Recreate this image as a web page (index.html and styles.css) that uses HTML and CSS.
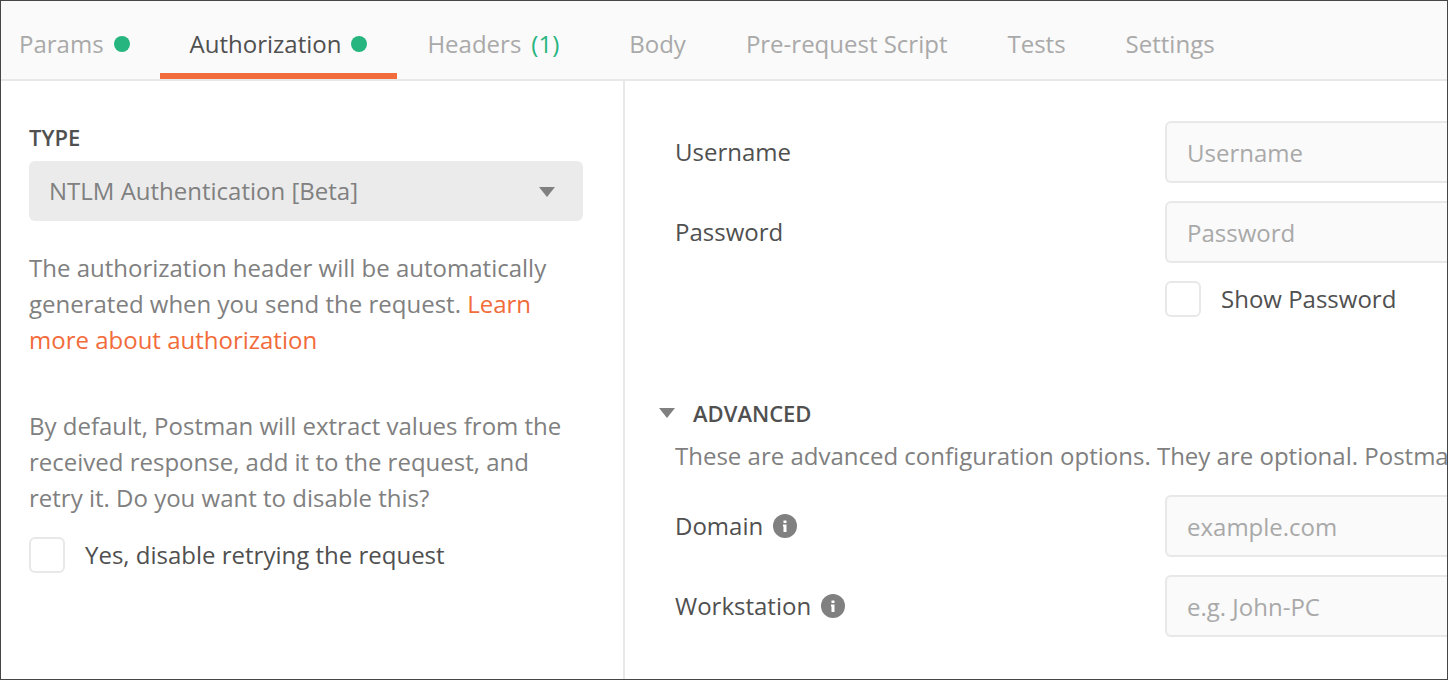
FILE: index.html
```html
<!DOCTYPE html>
<html lang="en">
<head>
<meta charset="utf-8">
<title>Authorization</title>
<link rel="stylesheet" href="styles.css">
</head>
<body>
<div class="app">
  <nav class="tabs">
    <button class="tab" type="button">Params<span class="dot"></span></button>
    <button class="tab tab-active" type="button">Authorization<span class="dot"></span></button>
    <button class="tab" type="button">Headers<span class="count">(1)</span></button>
    <button class="tab" type="button">Body</button>
    <button class="tab" type="button">Pre-request Script</button>
    <button class="tab" type="button">Tests</button>
    <button class="tab" type="button">Settings</button>
  </nav>
  <main class="panels">
    <section class="side">
      <label class="heading" for="auth-type">TYPE</label>
      <div class="select-wrap">
        <select class="select" id="auth-type">
          <option>NTLM Authentication [Beta]</option>
        </select>
        <svg class="caret select-caret" viewBox="0 0 16 10" aria-hidden="true"><path d="M0 0h16L8 10z"/></svg>
      </div>
      <p class="note">The authorization header will be automatically generated when you send the request. <a class="link" href="#">Learn more about authorization</a></p>
      <p class="note note-retry">By default, Postman will extract values from the received response, add it to the request, and retry it. Do you want to disable this?</p>
      <label class="check"><input class="checkbox" type="checkbox">Yes, disable retrying the request</label>
    </section>
    <section class="config">
      <div class="fields">
        <label class="label" for="username">Username</label>
        <input class="input" id="username" type="text" placeholder="Username">
        <label class="label" for="password">Password</label>
        <input class="input" id="password" type="password" placeholder="Password">
        <label class="check check-field"><input class="checkbox" type="checkbox">Show Password</label>
      </div>
      <button class="heading toggle" type="button">
        <svg class="caret" viewBox="0 0 16 10" aria-hidden="true"><path d="M0 0h16L8 10z"/></svg>ADVANCED
      </button>
      <p class="description">These are advanced configuration options. They are optional. Postman</p>
      <div class="fields">
        <label class="label" for="domain">Domain
          <svg class="info" viewBox="0 0 24 24" aria-hidden="true"><circle cx="12" cy="12" r="12"/><path d="M10.5 6.5h3v2.5h-3zM10 10.5h3.5V18h-3v-5.5H10z" fill="#fff"/></svg>
        </label>
        <input class="input" id="domain" type="text" placeholder="example.com">
        <label class="label" for="workstation">Workstation
          <svg class="info" viewBox="0 0 24 24" aria-hidden="true"><circle cx="12" cy="12" r="12"/><path d="M10.5 6.5h3v2.5h-3zM10 10.5h3.5V18h-3v-5.5H10z" fill="#fff"/></svg>
        </label>
        <input class="input" id="workstation" type="text" placeholder="e.g. John-PC">
      </div>
    </section>
  </main>
</div>
</body>
</html>
```
FILE: styles.css
```css
* {
  box-sizing: border-box;
}

body {
  margin: 0;
  font: 24px/36px "Open Sans", "Noto Sans", sans-serif;
  color: #505050;
  background: #fff;
}

button,
input,
select {
  margin: 0;
  font: inherit;
  color: inherit;
}

.app {
  display: flex;
  flex-direction: column;
  min-height: 100vh;
  border: 1px solid #464646;
  overflow: hidden;
}

.tabs {
  display: flex;
  padding-right: 30px;
  background: #fafafa;
  border-bottom: 2px solid #e8e8e8;
}

.tab {
  display: flex;
  flex: none;
  align-items: center;
  gap: 10px;
  padding: 25px 30px 11px;
  border: 0;
  border-bottom: 6px solid transparent;
  background: none;
  color: #a9a9a9;
  white-space: nowrap;
}

.tab:first-child {
  padding-left: 18px;
}

.tab-active {
  border-bottom-color: #f26b3a;
  color: #505050;
}

.dot {
  width: 16px;
  height: 16px;
  border-radius: 50%;
  background: #26b47f;
}

.count {
  margin-right: 10px;
  color: #26b47f;
}

.panels {
  display: grid;
  flex: 1;
  grid-template-columns: minmax(0, 624fr) minmax(0, 822fr);
}

.side {
  padding: 38px 40px 38px 28px;
  border-right: 2px solid #e8e8e8;
}

.heading {
  display: block;
  font-size: 22px;
  font-weight: 600;
}

.select-wrap {
  position: relative;
  margin: 6px 0 29px;
}

.select {
  display: block;
  width: 100%;
  height: 60px;
  padding: 0 60px 0 20px;
  appearance: none;
  border: 0;
  border-radius: 6px;
  background: #ebebeb;
  color: #808080;
}

.caret {
  width: 16px;
  height: 10px;
  fill: #808080;
}

.select-caret {
  position: absolute;
  top: 26px;
  right: 28px;
  pointer-events: none;
}

.note {
  margin: 0;
  color: #808080;
}

.note-retry {
  margin: 50px 0 21px;
}

.link {
  color: #f26b3a;
  text-decoration: none;
}

.check {
  display: flex;
  align-items: center;
  gap: 20px;
}

.check-field {
  grid-column: 2;
}

.checkbox {
  flex: none;
  width: 36px;
  height: 36px;
  appearance: none;
  border: 2px solid #e8e8e8;
  border-radius: 6px;
  background: #fff;
}

.checkbox:checked {
  background: #f26b3a;
}

.config {
  padding: 40px 0 40px 34px;
}

.fields {
  display: grid;
  grid-template-columns: 490px minmax(0, 1fr);
  row-gap: 18px;
  padding-left: 16px;
}

.label {
  display: flex;
  align-items: center;
  gap: 10px;
}

.input {
  width: 100%;
  height: 62px;
  padding: 0 20px;
  border: 2px solid #e8e8e8;
  border-right: 0;
  border-radius: 6px 0 0 6px;
  background: #fafafa;
}

.input::placeholder {
  color: #a9a9a9;
  opacity: 1;
}

.toggle {
  display: flex;
  align-items: center;
  gap: 18px;
  margin-top: 78px;
  padding: 0;
  border: 0;
  background: none;
}

.description {
  margin: 7px 0 21px;
  padding-left: 16px;
  overflow: hidden;
  color: #808080;
  white-space: nowrap;
}

.info {
  width: 24px;
  height: 24px;
  fill: #808080;
}
```
